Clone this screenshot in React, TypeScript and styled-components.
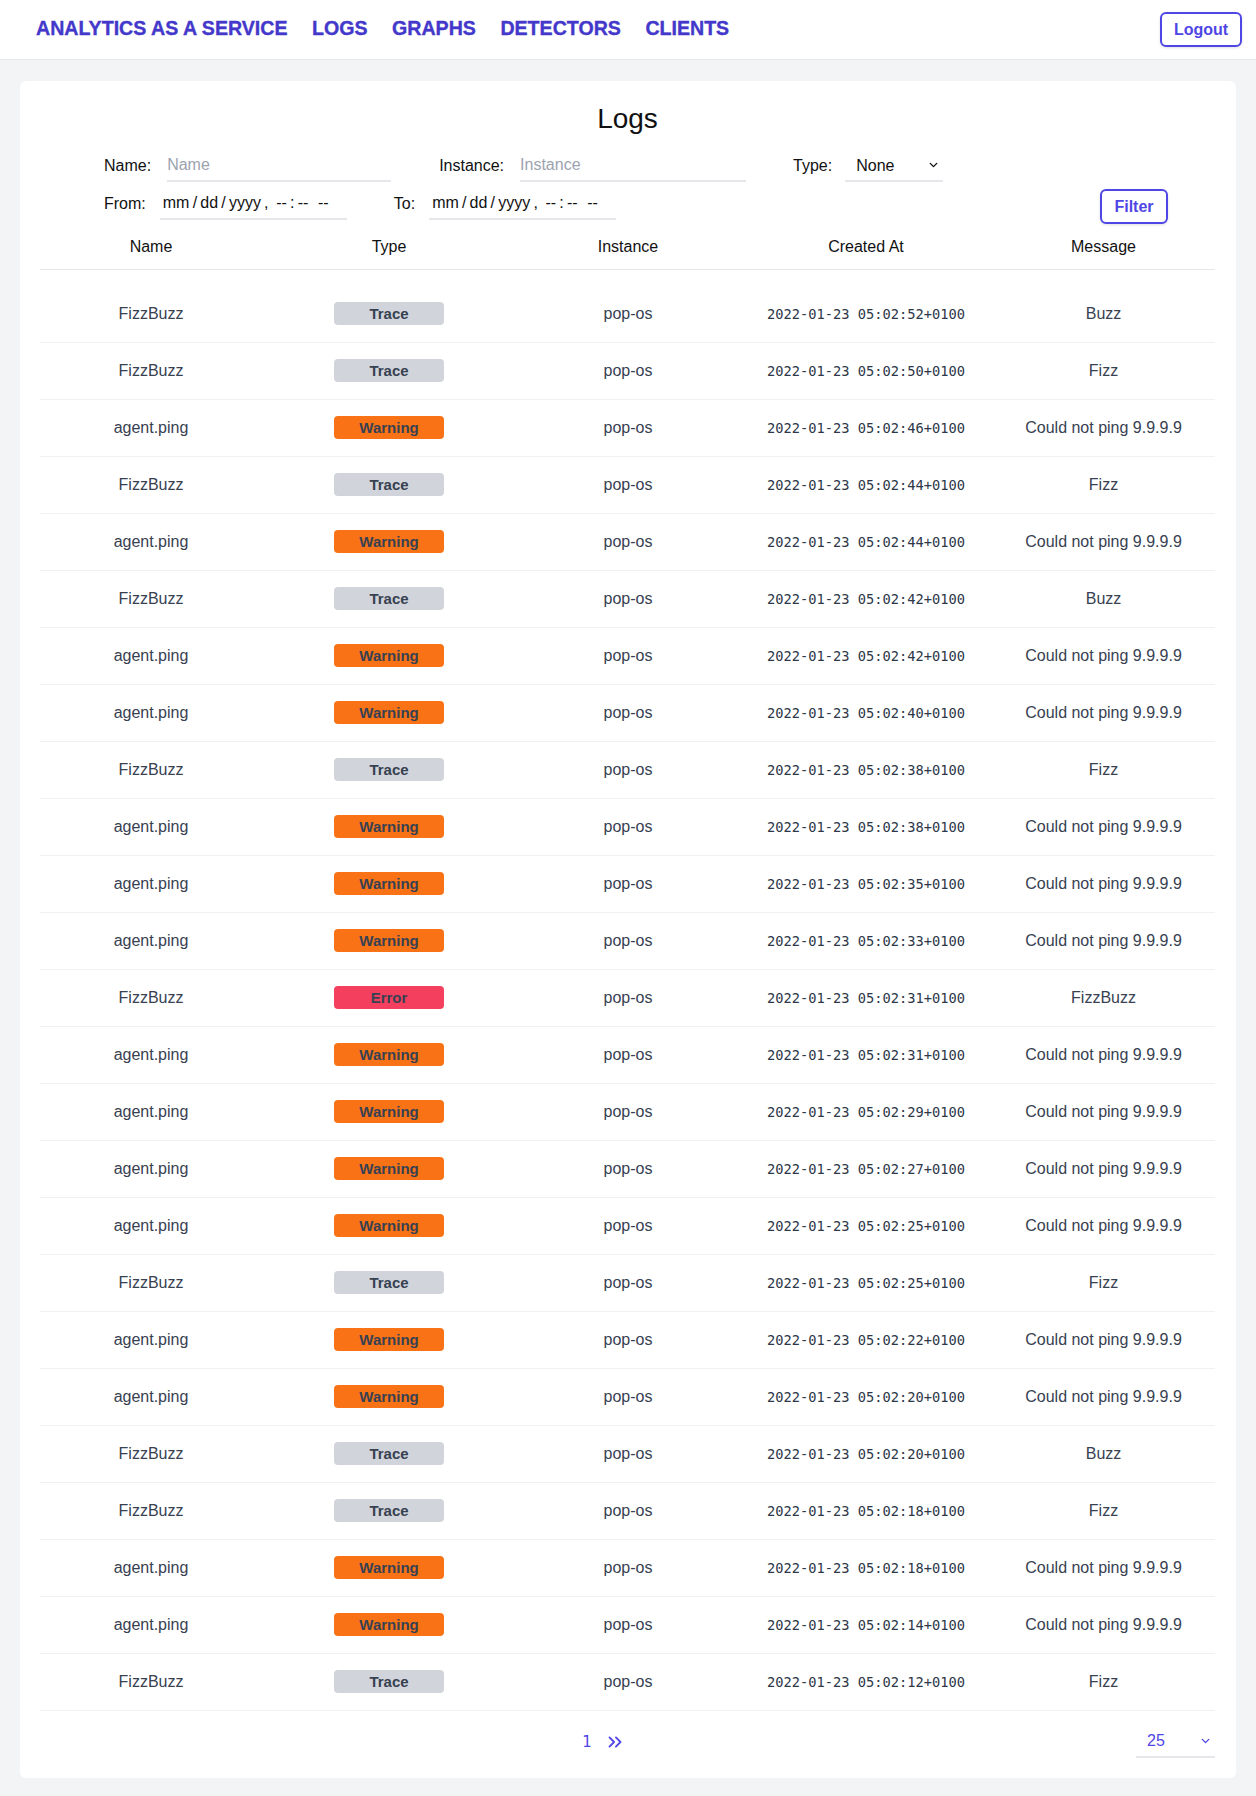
import React from "react";
import styled, { createGlobalStyle } from "styled-components";
import { ChevronDown, ChevronsRight } from "lucide-react";

type LogType = "Trace" | "Warning" | "Error";

interface LogEntry {
    name: string;
    type: LogType;
    instance: string;
    createdAt: string;
    message: string;
}

const GlobalStyle = createGlobalStyle`
    html, body {
        margin: 0;
        padding: 0;
        background: #f3f4f6;
        font-family: "Liberation Sans", Arial, sans-serif;
        color: #111827;
    }
    * { box-sizing: border-box; }
`;

const NavBar = styled.nav`
    height: 60px;
    background: #ffffff;
    border-bottom: 1px solid #e5e7eb;
    display: flex;
    align-items: center;
    padding: 0 14px 0 36px;
`;

const NavLinks = styled.div`
    display: flex;
    gap: 24.5px;
    margin-top: -3px;
`;

const NavLink = styled.a`
    font-size: 19.6px;
    font-weight: 700;
    color: #4338ca;
    text-decoration: none;
    -webkit-text-stroke: 0.35px #4338ca;
`;

const OutlineButton = styled.button`
    font-family: "Liberation Sans", Arial, sans-serif;
    font-size: 16px;
    font-weight: 700;
    color: #4f46e5;
    background: #ffffff;
    border: 2px solid #4f46e5;
    border-radius: 6px;
    height: 35px;
    padding: 0 12px;
    box-shadow: 0 1px 3px rgba(0, 0, 0, 0.12);
    cursor: pointer;
`;

const LogoutButton = styled(OutlineButton)`
    margin-left: auto;
    width: 82px;
`;

const Main = styled.main`
    padding: 21px 20px 20px;
`;

const Card = styled.section`
    background: #ffffff;
    border-radius: 6px;
    padding: 20px 21px 20px 20px;
`;

const Title = styled.h1`
    margin: 0;
    text-align: center;
    font-size: 28px;
    font-weight: 400;
    line-height: 36px;
    color: #111111;
`;

const Filters = styled.div`
    padding-left: 64px;
    padding-right: 47px;
    margin-top: 13px;
    display: flex;
    flex-direction: column;
    gap: 6px;
`;

const FilterRow = styled.div`
    display: flex;
    align-items: center;
    height: 32px;
`;

const Field = styled.label<{ $gap: number; $after?: number }>`
    display: flex;
    align-items: center;
    gap: ${(p) => p.$gap}px;
    margin-right: ${(p) => p.$after ?? 47}px;
    font-size: 16px;
    color: #111111;
`;

const TextInput = styled.input<{ $width: number }>`
    width: ${(p) => p.$width}px;
    height: 32px;
    border: none;
    border-bottom: 2px solid #e5e7eb;
    padding: 0;
    font-family: "Liberation Sans", Arial, sans-serif;
    font-size: 16px;
    color: #111111;
    outline: none;
    &::placeholder {
        color: #9ca3af;
    }
`;

const DateInput = styled.input<{ $width: number }>`
    width: ${(p) => p.$width}px;
    height: 32px;
    border: none;
    border-bottom: 2px solid #e5e7eb;
    padding: 0 2px;
    font-family: "Liberation Sans", Arial, sans-serif;
    font-size: 16px;
    color: #111111;
    outline: none;
    background: transparent;
    &::-webkit-calendar-picker-indicator {
        display: none;
    }
    &::-webkit-datetime-edit-text {
        padding: 0 2.2px;
    }
`;

const SelectWrap = styled.div<{ $width: number }>`
    position: relative;
    width: ${(p) => p.$width}px;
    border-bottom: 2px solid #e5e7eb;
    display: flex;
    align-items: center;
`;

const Select = styled.select<{ $color: string }>`
    appearance: none;
    width: 100%;
    height: 30px;
    border: none;
    background: transparent;
    padding: 0 11px;
    font-family: "Liberation Sans", Arial, sans-serif;
    font-size: 16px;
    color: ${(p) => p.$color};
    outline: none;
`;

const Chevron = styled.span<{ $color: string }>`
    position: absolute;
    right: 3px;
    top: 50%;
    transform: translateY(-50%);
    display: flex;
    color: ${(p) => p.$color};
    pointer-events: none;
`;

const FilterButton = styled(OutlineButton)`
    margin-left: auto;
    width: 68px;
    margin-top: 5px;
`;

const columns = "222px 254px 224px 252px 1fr";

const HeaderRow = styled.div`
    display: grid;
    grid-template-columns: ${columns};
    margin-top: 4px;
    padding: 12px 0 11px;
    line-height: 22px;
    border-bottom: 1px solid #e5e7eb;
    font-size: 16px;
    color: #111111;
    text-align: center;
`;

const Body = styled.div`
    padding-top: 16px;
`;

const Row = styled.div`
    display: grid;
    grid-template-columns: ${columns};
    align-items: center;
    height: 57px;
    border-bottom: 1px solid #f0f1f3;
    text-align: center;
    font-size: 16px;
    color: #374151;
`;

const Cell = styled.div`
    display: flex;
    justify-content: center;
    align-items: center;
`;

const DateCell = styled(Cell)`
    font-family: "DejaVu Sans Mono", monospace;
    font-size: 13.7px;
    color: #2d3748;
`;

const badgeColors: Record<LogType, string> = {
    Trace: "#d1d5db",
    Warning: "#f97316",
    Error: "#f43f5e",
};

const Badge = styled.span<{ $type: LogType }>`
    display: inline-flex;
    align-items: center;
    justify-content: center;
    width: 110px;
    height: 23px;
    margin-top: -2px;
    border-radius: 4px;
    background: ${(p) => badgeColors[p.$type]};
    color: #374151;
    font-weight: 700;
    font-size: 15px;
`;

const Pagination = styled.div`
    display: grid;
    grid-template-columns: 1fr auto;
    align-items: center;
    padding-top: 14px;
    height: 47px;
`;

const Pages = styled.div`
    display: flex;
    justify-content: center;
    align-items: center;
    gap: 12px;
    padding-left: 32px;
    color: #4f46e5;
`;

const PageNumber = styled.span`
    font-family: "DejaVu Sans", sans-serif;
    font-size: 15px;
`;

const DAY = "2022-01-23 05:02:";

const logs: LogEntry[] = [
    ["FizzBuzz", "Trace", "52", "Buzz"],
    ["FizzBuzz", "Trace", "50", "Fizz"],
    ["agent.ping", "Warning", "46", ""],
    ["FizzBuzz", "Trace", "44", "Fizz"],
    ["agent.ping", "Warning", "44", ""],
    ["FizzBuzz", "Trace", "42", "Buzz"],
    ["agent.ping", "Warning", "42", ""],
    ["agent.ping", "Warning", "40", ""],
    ["FizzBuzz", "Trace", "38", "Fizz"],
    ["agent.ping", "Warning", "38", ""],
    ["agent.ping", "Warning", "35", ""],
    ["agent.ping", "Warning", "33", ""],
    ["FizzBuzz", "Error", "31", "FizzBuzz"],
    ["agent.ping", "Warning", "31", ""],
    ["agent.ping", "Warning", "29", ""],
    ["agent.ping", "Warning", "27", ""],
    ["agent.ping", "Warning", "25", ""],
    ["FizzBuzz", "Trace", "25", "Fizz"],
    ["agent.ping", "Warning", "22", ""],
    ["agent.ping", "Warning", "20", ""],
    ["FizzBuzz", "Trace", "20", "Buzz"],
    ["FizzBuzz", "Trace", "18", "Fizz"],
    ["agent.ping", "Warning", "18", ""],
    ["agent.ping", "Warning", "14", ""],
    ["FizzBuzz", "Trace", "12", "Fizz"],
].map(([name, type, sec, message]) => ({
    name,
    type: type as LogType,
    instance: "pop-os",
    createdAt: DAY + sec + "+0100",
    message: message || "Could not ping 9.9.9.9",
}));

export default function App() {
    return (
        <>
            <GlobalStyle />
            <NavBar>
                <NavLinks>
                    <NavLink href="#">ANALYTICS AS A SERVICE</NavLink>
                    <NavLink href="#">LOGS</NavLink>
                    <NavLink href="#">GRAPHS</NavLink>
                    <NavLink href="#">DETECTORS</NavLink>
                    <NavLink href="#">CLIENTS</NavLink>
                </NavLinks>
                <LogoutButton>Logout</LogoutButton>
            </NavBar>
            <Main>
                <Card>
                    <Title>Logs</Title>
                    <Filters>
                        <FilterRow>
                            <Field $gap={16} $after={48}>
                                Name:
                                <TextInput $width={224} placeholder="Name" />
                            </Field>
                            <Field $gap={16} $after={47}>
                                Instance:
                                <TextInput $width={226} placeholder="Instance" />
                            </Field>
                            <Field $gap={13}>
                                Type:
                                <SelectWrap $width={98}>
                                    <Select $color="#111111" defaultValue="None">
                                        <option>None</option>
                                        <option>Trace</option>
                                        <option>Warning</option>
                                        <option>Error</option>
                                    </Select>
                                    <Chevron $color="#111111">
                                        <ChevronDown size={13} strokeWidth={2.5} />
                                    </Chevron>
                                </SelectWrap>
                            </Field>
                        </FilterRow>
                        <FilterRow>
                            <Field $gap={14} $after={47}>
                                From:
                                <DateInput type="datetime-local" $width={187} />
                            </Field>
                            <Field $gap={14}>
                                To:
                                <DateInput type="datetime-local" $width={187} />
                            </Field>
                            <FilterButton>Filter</FilterButton>
                        </FilterRow>
                    </Filters>
                    <HeaderRow>
                        <div>Name</div>
                        <div>Type</div>
                        <div>Instance</div>
                        <div>Created At</div>
                        <div>Message</div>
                    </HeaderRow>
                    <Body>
                        {logs.map((log, i) => (
                            <Row key={i}>
                                <Cell>{log.name}</Cell>
                                <Cell>
                                    <Badge $type={log.type}>{log.type}</Badge>
                                </Cell>
                                <Cell>{log.instance}</Cell>
                                <DateCell>{log.createdAt}</DateCell>
                                <Cell>{log.message}</Cell>
                            </Row>
                        ))}
                    </Body>
                    <Pagination>
                        <Pages>
                            <PageNumber>1</PageNumber>
                            <ChevronsRight size={22} strokeWidth={2} />
                        </Pages>
                        <SelectWrap $width={79}>
                            <Select $color="#4f46e5" defaultValue="25">
                                <option>10</option>
                                <option>25</option>
                                <option>50</option>
                            </Select>
                            <Chevron $color="#4f46e5">
                                <ChevronDown size={13} strokeWidth={2.5} />
                            </Chevron>
                        </SelectWrap>
                    </Pagination>
                </Card>
            </Main>
        </>
    );
}
